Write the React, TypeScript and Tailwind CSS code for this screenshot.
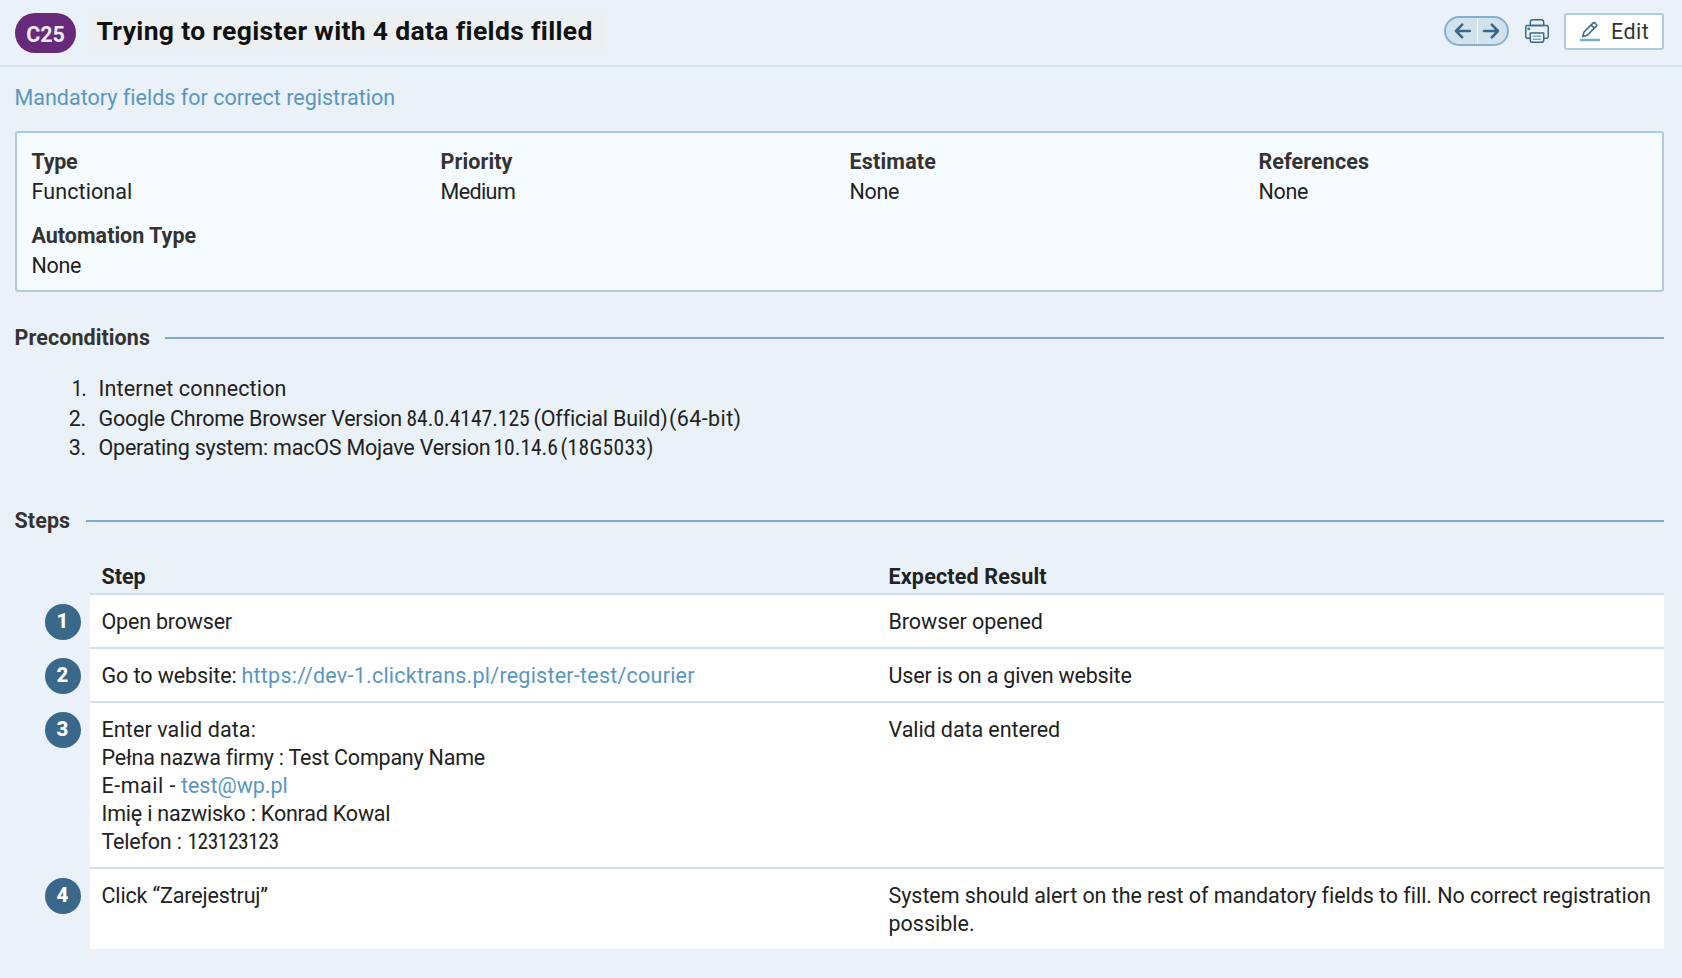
import type { ReactNode } from "react";

function Badge() {
  return (
    <span className="flex h-10 w-[61px] items-center justify-center rounded-[20px] bg-[#672a7b] pt-[4px] text-[21.5px] leading-[30px] font-bold text-[#f1eaf4] [font-stretch:90%]">
      C25
    </span>
  );
}

function NavArrows() {
  return (
    <div className="mb-[2px] flex h-[30px] w-[65px] overflow-hidden rounded-[15px] border-2 border-[#86b0cf] bg-[#d2e2ec] text-[#39688a]">
      <button aria-label="Previous" className="flex flex-1 items-center justify-center border-r border-white pl-[3px]">
        <svg width="18" height="18" viewBox="0 0 18 18" fill="none" stroke="currentColor" strokeWidth="2.6" strokeLinecap="round" strokeLinejoin="round">
          <path d="M15.800 9H2.2M8.2 2.7L2 9l6.200 6.300" />
        </svg>
      </button>
      <button aria-label="Next" className="flex flex-1 items-center justify-center pr-[2px]">
        <svg width="18" height="18" viewBox="0 0 18 18" fill="none" stroke="currentColor" strokeWidth="2.6" strokeLinecap="round" strokeLinejoin="round">
          <path d="M2 9h13.800M9.800 2.700L16 9l-6.200 6.300" />
        </svg>
      </button>
    </div>
  );
}

function PrinterIcon() {
  return (
    <svg width="24" height="24" viewBox="0 0 24 24" fill="none" stroke="#39688a" strokeWidth="1.5" strokeLinejoin="round">
      <path d="M5.300 19.300H2.600Q0.700 19.300 0.700 17.400V8.600Q0.700 6.500 2.800 6.500H21.200Q23.300 6.500 23.300 8.600V17.400Q23.300 19.300 21.400 19.300H18.700" />
      <path d="M5.300 6.500V3Q5.300 0.700 7.600 0.700H16.400Q18.700 0.700 18.700 3V6.500Z" />
      <path d="M5.300 14H18.700V21.600Q18.700 23.300 17 23.300H7Q5.300 23.300 5.300 21.600Z" fill="#f6fbff" />
      <path d="M7.700 17.200H16.300M7.700 20.200H16.300" stroke="#7daacb" />
      <circle cx="3.700" cy="9.700" r="1.500" fill="#1fa37a" stroke="none" />
    </svg>
  );
}

function EditIcon() {
  return (
    <svg width="22" height="22" viewBox="0 0 22 22" fill="none">
      <path d="M3.800 15.600L5 11L14.200 1.900Q15 1.200 15.800 1.900L17.400 3.500Q18.100 4.300 17.400 5.100L8.300 14.200ZM12.200 4L15.300 7.100" stroke="#39688a" strokeWidth="1.600" strokeLinejoin="round" />
      <path d="M2 19H20" stroke="#7daacb" strokeWidth="2.600" strokeLinecap="round" />
    </svg>
  );
}

function Field({ label, value }: { label: ReactNode; value: ReactNode }) {
  return (
    <div className="leading-[30px]">
      <div className="font-bold text-[#333]">{label}</div>
      <div>{value}</div>
    </div>
  );
}

function SectionTitle({ children, className }: { children: ReactNode; className: string }) {
  return (
    <div className={`flex items-center pr-[18px] pl-[14.500px] leading-7 font-bold text-[#333] ${className}`}>
      {children}
      <span className="h-0.5 flex-1 bg-[#7daacb]" />
    </div>
  );
}

function ListItem({ marker, children }: { marker: ReactNode; children: ReactNode }) {
  return (
    <li className="flex whitespace-pre">
      <span className="w-[86px] text-right">{marker}</span>
      <span className="flex pl-[12.500px]">{children}</span>
    </li>
  );
}

function StepRow({ n, step, result, last }: { n: number; step: ReactNode; result: ReactNode; last?: boolean }) {
  return (
    <div className="flex">
      <div className="w-[90px] pt-[9px] pl-[45px]">
        <div className="flex size-9 items-center justify-center rounded-full bg-[#39688a] pr-px pb-[2px] text-[20.500px] leading-none font-extrabold text-white [font-stretch:90%]">
          <span>{n}</span>
        </div>
      </div>
      <div className={`grid w-[1574px] grid-cols-2 bg-white leading-7 ${last ? "" : "border-b-2 border-[#d0e0eb]"}`}>
        <div className="pt-[13px] pb-[11px] pl-[11.500px]">{step}</div>
        <div className="pt-[13px] pb-[11px] pl-[11.500px]">{result}</div>
      </div>
    </div>
  );
}

export default function App() {
  return (
    <div className="h-[978px] w-[1682px] overflow-hidden bg-[#eaf1f8] font-[Roboto,sans-serif] text-[21.5px] whitespace-nowrap text-[#222]">
      <header className="flex h-[67px] items-start border-b-2 border-[#d3e1ec] pt-[13px] pr-[18px] pl-[15px]">
        <Badge />
        <h1 className="ml-[13px] h-[37px] w-[515px] bg-[#edf0f2] pl-[7.500px] text-[26.5px] leading-[35px] font-bold tracking-[0.326px] text-[#111]">
          Trying to register with 4 data fields filled
        </h1>
        <div className="ml-auto flex h-[37px] items-center">
          <NavArrows />
          <span className="mb-[2px] ml-4">
            <PrinterIcon />
          </span>
          <button className="ml-[15px] flex h-[37px] w-[100px] items-center rounded-[3px] border-2 border-[#aecbe0] bg-white pl-[13px] text-[#333]">
            <EditIcon />
            <span className="ml-[10px] pt-px tracking-[0.45px]">Edit</span>
          </button>
        </div>
      </header>

      <main>
        <div className="pt-[17px] pl-[14.500px] leading-7 tracking-[0.01px] text-[#5a96bf]">
          <a>Mandatory fields for correct registration</a>
        </div>

        <section className="mt-[19px] ml-[15px] grid h-[161px] w-[1649px] grid-cols-[409px_409px_409px_1fr] content-start gap-y-[14px] rounded-[3px] border-2 border-[#aecbe0] bg-[#f6fbff] pt-[14px] pl-[14.500px]">
          <Field label={<span className="tracking-[-0.3px] [font-stretch:95%]">Type</span>} value={<span className="tracking-[0.1px]">Functional</span>} />
          <Field label={<span className="tracking-[0.1px]">Priority</span>} value={<span className="tracking-[-0.6px] [font-stretch:95%]">Medium</span>} />
          <Field label={<span className="tracking-[0.185px]">Estimate</span>} value={<span className="tracking-[-0.324px]">None</span>} />
          <Field label={<span className="tracking-[0.09px]">References</span>} value={<span className="tracking-[-0.324px]">None</span>} />
          <Field label={<span>Automation Type</span>} value={<span className="tracking-[-0.324px]">None</span>} />
        </section>

        <SectionTitle className="mt-8">
          <span className="w-[150.500px] tracking-[0.08px]">Preconditions</span>
        </SectionTitle>
        <ol className="mt-[22px] leading-[29.5px]">
          <ListItem marker={<span className="tracking-[-1px] [font-stretch:85%]">1.</span>}>
            <span className="tracking-[0.14px]">Internet connection</span>
          </ListItem>
          <ListItem marker={<span className="tracking-[-0.283px]">2.</span>}>
            <span className="w-[308px] tracking-[-0.24px]">Google Chrome Browser Version </span>
            <span className="w-[127px] [font-stretch:87%]">84.0.4147.125 </span>
            <span className="w-[135.500px] tracking-[-0.15px]">(Official Build) </span>
            <span className="tracking-[0.4px]">(64-bit)</span>
          </ListItem>
          <ListItem marker={<span className="tracking-[-0.283px]">3.</span>}>
            <span className="w-[395px] tracking-[-0.22px]">Operating system: macOS Mojave Version </span>
            <span className="w-[67px] [font-stretch:84%]">10.14.6 </span>
            <span className="tracking-[0.35px] [font-stretch:80%]">(18G5033)</span>
          </ListItem>
        </ol>

        <SectionTitle className="mt-[44.500px]">
          <span className="w-[71.500px] tracking-[0.1px]">Steps</span>
        </SectionTitle>

        <div className="mt-7">
          <div className="ml-[90px] grid h-8 w-[1574px] grid-cols-2 border-b-2 border-[#d0e0eb] leading-7 font-bold">
            <div className="pl-[11.500px] tracking-[-0.041px]">Step</div>
            <div className="pl-[11.500px] tracking-[0.17px]">Expected Result</div>
          </div>
          <StepRow
            n={1}
            step={<span className="tracking-[-0.2px]">Open browser</span>}
            result={<span className="tracking-[-0.05px]">Browser opened</span>}
          />
          <StepRow
            n={2}
            step={
              <div className="flex">
                <span className="w-[140px] tracking-[-0.08px]">Go to website:</span>
                <a className="tracking-[0.23px] text-[#5a96bf]">https://dev-1.clicktrans.pl/register-test/courier</a>
              </div>
            }
            result={<span className="tracking-[-0.18px]">User is on a given website</span>}
          />
          <StepRow
            n={3}
            step={
              <>
                <div className="tracking-[0.1px]">Enter valid data:</div>
                <div className="tracking-[-0.22px]">Pełna nazwa firmy : Test Company Name</div>
                <div className="flex">
                  <span className="w-[79.500px] tracking-[0.5px]">E-mail -</span>
                  <a className="tracking-[-0.038px] text-[#5a96bf]">test@wp.pl</a>
                </div>
                <div className="tracking-[-0.2px]">Imię i nazwisko : Konrad Kowal</div>
                <div className="flex">
                  <span className="w-[86px] tracking-[-0.2px]">Telefon :</span>
                  <span className="tracking-[-0.5px] [font-stretch:82%]">123123123</span>
                </div>
              </>
            }
            result={<span className="tracking-[-0.08px]">Valid data entered</span>}
          />
          <StepRow
            n={4}
            last
            step={<span className="tracking-[-0.15px]">Click “Zarejestruj”</span>}
            result={
              <>
                <div className="tracking-[-0.05px]">System should alert on the rest of mandatory fields to fill. No correct registration</div>
                <div>possible.</div>
              </>
            }
          />
        </div>
      </main>
    </div>
  );
}
